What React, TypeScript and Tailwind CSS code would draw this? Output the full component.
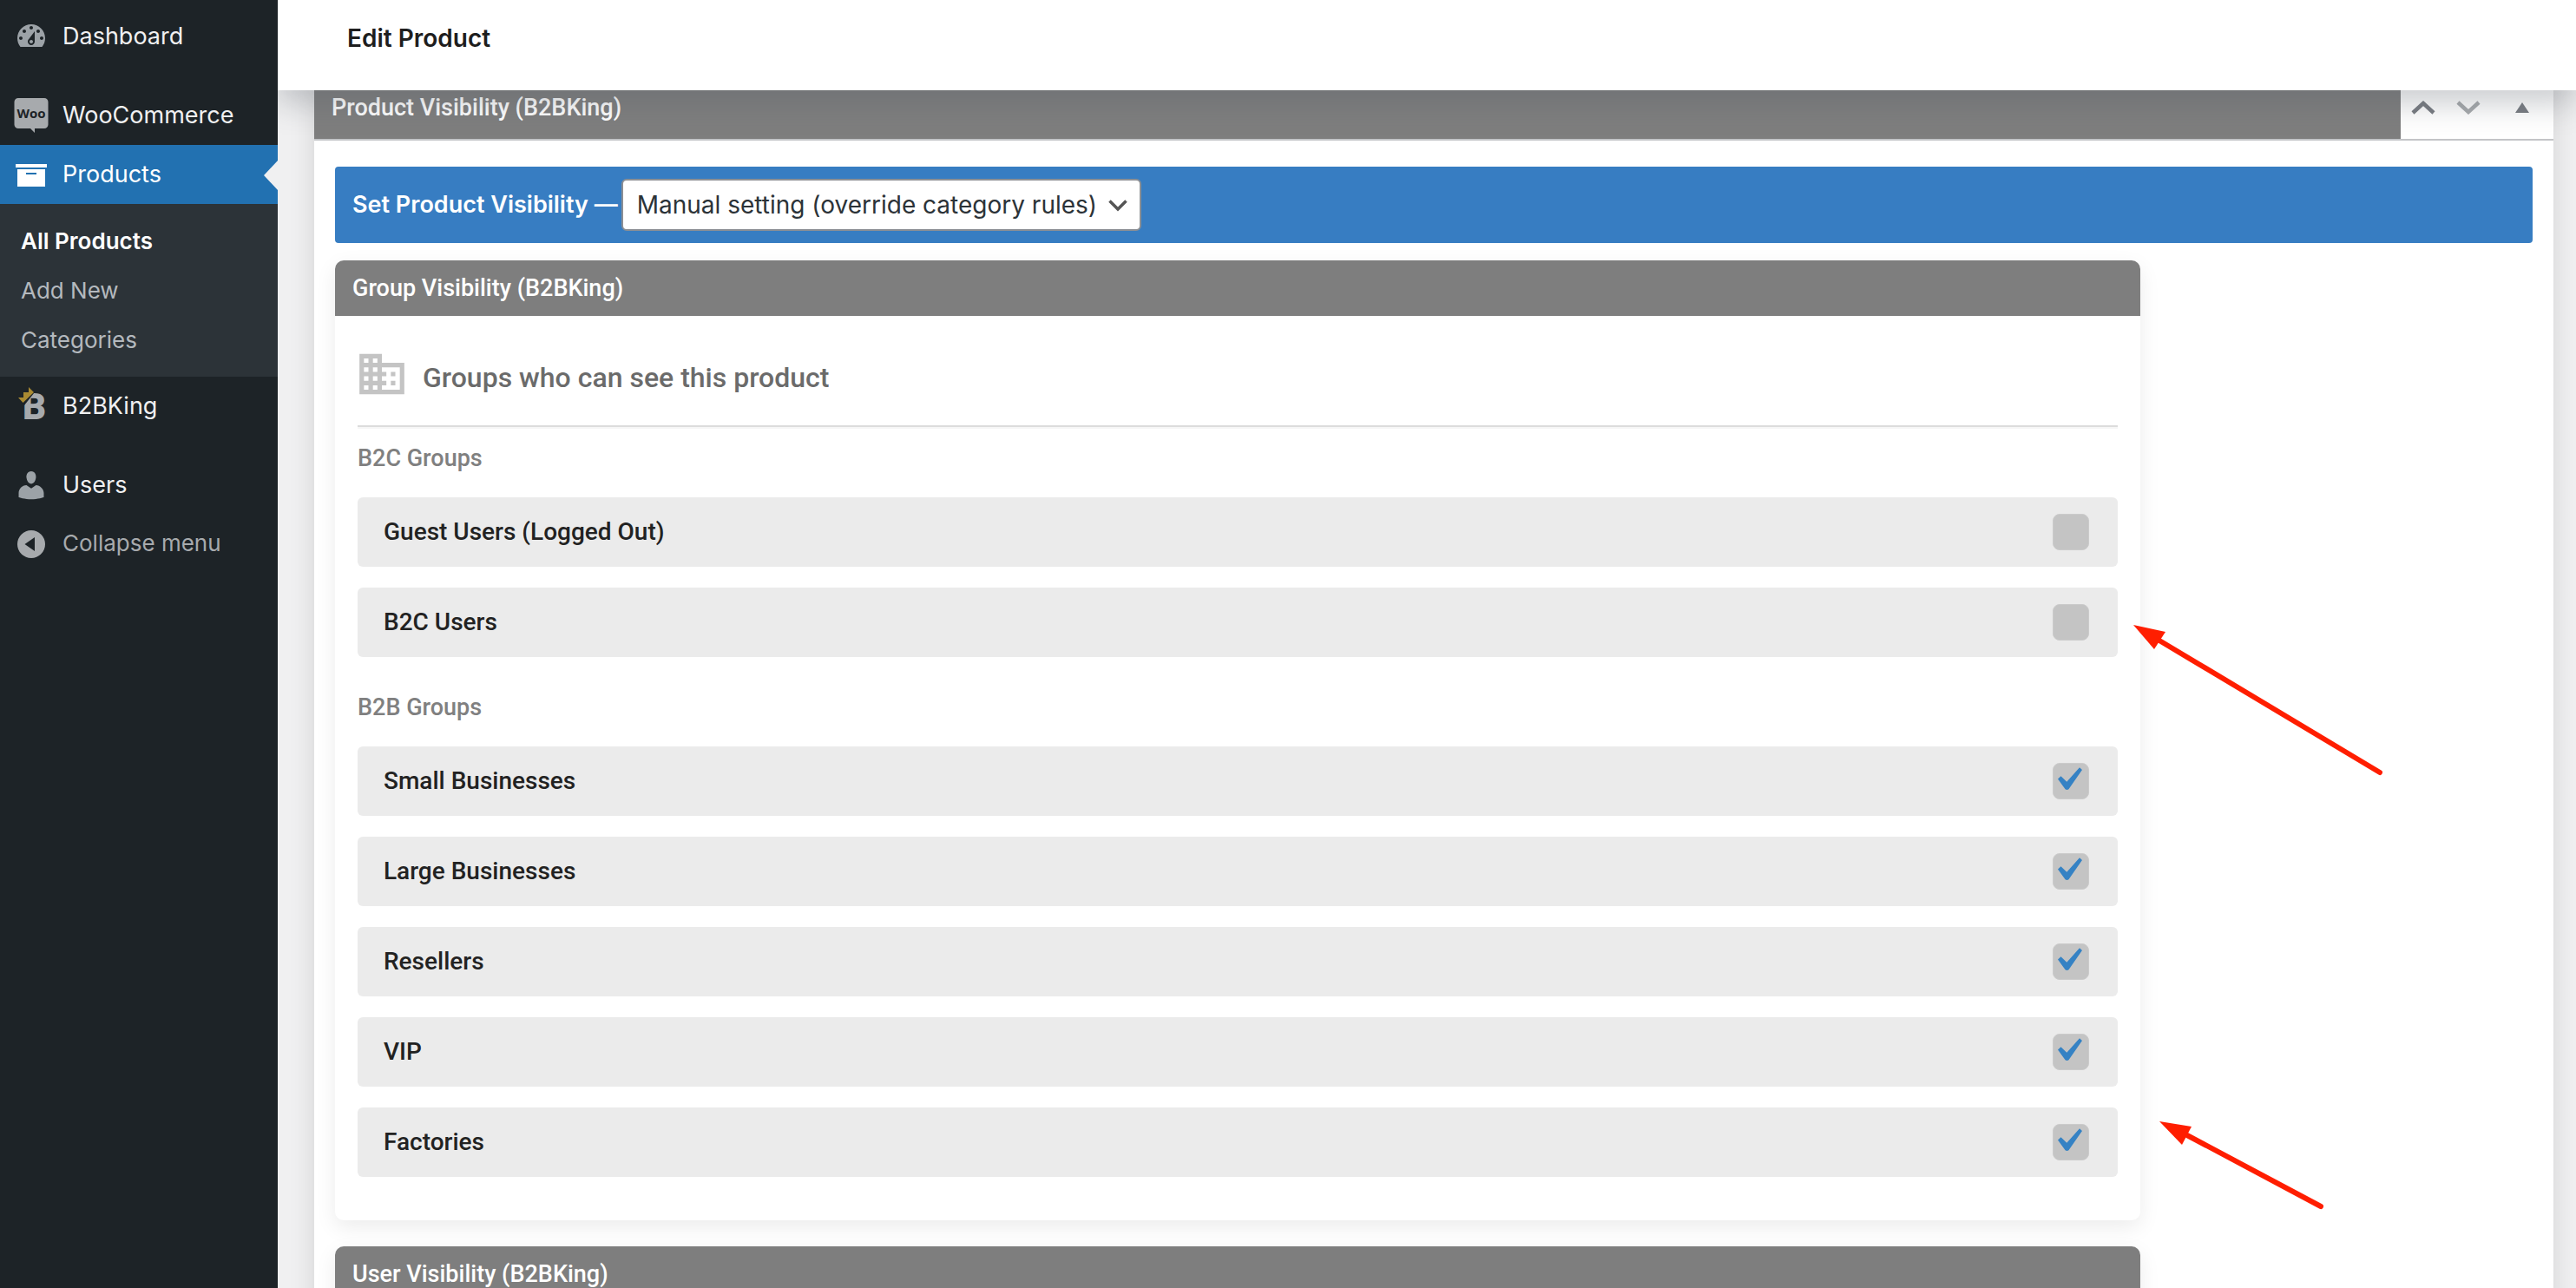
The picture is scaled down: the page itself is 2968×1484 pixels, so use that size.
import React, { useState } from 'react';

type Group = { id: string; name: string; visible: boolean };

const b2cGroups: Group[] = [
  { id: 'guests', name: 'Guest Users (Logged Out)', visible: false },
  { id: 'b2c', name: 'B2C Users', visible: false },
];

const b2bGroups: Group[] = [
  { id: 'small', name: 'Small Businesses', visible: true },
  { id: 'large', name: 'Large Businesses', visible: true },
  { id: 'resellers', name: 'Resellers', visible: true },
  { id: 'vip', name: 'VIP', visible: true },
  { id: 'factories', name: 'Factories', visible: true },
];

const DashboardIcon = () => (
  <svg viewBox="0 0 20 20" className="w-10 h-10 fill-[#9ca2a7]">
    <path d="M3.76 16h12.48c1.1-1.37 1.76-3.11 1.76-5 0-4.42-3.58-8-8-8s-8 3.58-8 8c0 1.89.66 3.63 1.76 5zM10 4c.55 0 1 .45 1 1s-.45 1-1 1-1-.45-1-1 .45-1 1-1zM6 6c.55 0 1 .45 1 1s-.45 1-1 1-1-.45-1-1 .45-1 1-1zm8 0c.55 0 1 .45 1 1s-.45 1-1 1-1-.45-1-1 .45-1 1-1zm-5.37 5.55L12 7v6c0 1.1-.9 2-2 2s-2-.9-2-2c0-.57.24-1.08.63-1.45zM4 10c.55 0 1 .45 1 1s-.45 1-1 1-1-.45-1-1 .45-1 1-1zm12 0c.55 0 1 .45 1 1s-.45 1-1 1-1-.45-1-1 .45-1 1-1zm-5 3c0-.55-.45-1-1-1s-1 .45-1 1 .45 1 1 1 1-.45 1-1z" />
  </svg>
);

const WooIcon = () => (
  <svg viewBox="0 0 40 40" className="w-10 h-10 fill-[#a7aaad]">
    <path d="M5 0h30a4.500 4.500 0 0 1 4.500 4.500v26a4.500 4.500 0 0 1-4.500 4.500H24v5l-5-5H5A4.500 4.500 0 0 1 .5 30.500v-26A4.500 4.500 0 0 1 5 0z" />
    <text
      x="20"
      y="23"
      textAnchor="middle"
      fontSize="15"
      className="fill-[#1d2327] font-['Open_Sans',sans-serif] font-bold"
    >
      Woo
    </text>
  </svg>
);

const ProductsIcon = () => (
  <svg viewBox="0 0 20 20" className="w-10 h-10 fill-white">
    <path d="M19 4v2H1V4h18zM2 7h16v10H2V7zm11 3V9H7v1h6z" />
  </svg>
);

const KingIcon = () => (
  <svg viewBox="0 0 40 40" className="w-10 h-10 overflow-visible">
    <text x="10" y="35" fontSize="42" className="fill-[#a7aaad] font-[Roboto,sans-serif] font-black">
      B
    </text>
    <path d="M4 10l7 1-1-6 6.500 1L16-1l7.500 5.500L12 19z" className="fill-[#1d2327]" />
    <path d="M5 10h6V4h6v-6l6 6L10.500 16z" className="fill-[#a98a32]" />
  </svg>
);

const UsersIcon = () => (
  <svg viewBox="0 0 20 20" className="w-10 h-10 fill-[#9ca2a7]">
    <path d="M10 9.250c-2.270 0-2.730-3.440-2.730-3.440C7 4.020 7.820 2 9.970 2c2.160 0 2.980 2.020 2.710 3.810 0 0-.41 3.440-2.680 3.440zm0 2.570L12.720 10c2.390 0 4.520 2.330 4.520 4.530v2.490s-3.650 1.130-7.240 1.130c-3.650 0-7.240-1.130-7.240-1.130v-2.490c0-2.250 1.940-4.480 4.470-4.480z" />
  </svg>
);

const CollapseIcon = () => (
  <svg viewBox="0 0 40 40" className="w-10 h-10">
    <circle cx="20" cy="22" r="16" className="fill-[#a7aaad]" />
    <path d="M12.500 22L24 14v16z" className="fill-[#1d2327]" />
  </svg>
);

const menuRow = 'flex items-center h-[68px] pl-4 gap-4 text-[27px] text-[#f0f0f1]';

const Sidebar = () => (
  <nav className="relative z-20 w-80 shrink-0 bg-[#1d2327] pt-2 font-[Inter,sans-serif]">
    <a href="#dashboard" className={menuRow}>
      <DashboardIcon />
      Dashboard
    </a>
    <a href="#woocommerce" className={`${menuRow} mt-[23px]`}>
      <WooIcon />
      WooCommerce
    </a>
    <a href="#products" className={`${menuRow} relative bg-[#2271b1] text-white`}>
      <ProductsIcon />
      Products
      <span className="absolute right-0 top-[18px] border-y-[17px] border-r-[16px] border-y-transparent border-r-[#f0f0f1]" />
    </a>
    <ul className="bg-[#2c3338] py-[14px] text-[26px] text-[#b4b9be]">
      <li>
        <a href="#all-products" className="flex items-center h-[57px] pl-6 font-semibold text-white">
          All Products
        </a>
      </li>
      <li>
        <a href="#add-new" className="flex items-center h-[57px] pl-6">
          Add New
        </a>
      </li>
      <li>
        <a href="#categories" className="flex items-center h-[57px] pl-6">
          Categories
        </a>
      </li>
    </ul>
    <a href="#b2bking" className={menuRow}>
      <KingIcon />
      B2BKing
    </a>
    <a href="#users" className={`${menuRow} mt-[23px]`}>
      <UsersIcon />
      Users
    </a>
    <button type="button" className="flex items-center h-16 pl-4 gap-4 text-[26px] text-[#a7aaad]">
      <CollapseIcon />
      Collapse menu
    </button>
  </nav>
);

const GroupRow = ({ group }: { group: Group }) => {
  const [checked, setChecked] = useState(group.visible);

  return (
    <label className="flex items-center justify-between h-20 pl-[30px] pr-[33px] rounded-md bg-[#ebebeb] text-[28px] font-medium text-[#222]">
      {group.name}
      <span className="grid">
        <input
          type="checkbox"
          checked={checked}
          onChange={(e) => setChecked(e.target.checked)}
          className="peer col-start-1 row-start-1 appearance-none size-[42px] rounded-lg border border-[#cbcbcb] bg-[#c4c4c4]"
        />
        <svg
          viewBox="0 0 42 42"
          className="col-start-1 row-start-1 size-[42px] pointer-events-none invisible peer-checked:visible fill-[#3582c4]"
        >
          <path d="M6 18.500L9.500 15.300 16.300 21.700 31 5.300 34 8 18.500 30.300Q16.500 31.500 14.500 30.300z" />
        </svg>
      </span>
    </label>
  );
};

const GroupList = ({ title, groups }: { title: string; groups: Group[] }) => (
  <fieldset>
    <legend className="h-[81px] pt-4 text-[27px] leading-10 font-medium text-[#808080]">{title}</legend>
    <div className="flex flex-col gap-6">
      {groups.map((group) => (
        <GroupRow key={group.id} group={group} />
      ))}
    </div>
  </fieldset>
);

const Card = ({ title, children }: { title: string; children?: React.ReactNode }) => (
  <section className="rounded-[10px] bg-white shadow-[0_8px_24px_rgba(0,0,0,0.08)]">
    <h2 className="flex items-center h-16 px-5 rounded-t-[10px] bg-[#7e7e7e] text-[27px] font-medium text-white">
      {title}
    </h2>
    {children}
  </section>
);

const Arrows = () => (
  <svg
    viewBox="0 0 300 700"
    className="absolute left-full top-[410px] -ml-3 w-[300px] h-[700px] fill-[#ff1e00] stroke-[#ff1e00] pointer-events-none"
  >
    <path d="M34 28L288 180" strokeWidth="6" strokeLinecap="round" />
    <path d="M4 10L41 18 28 38z" stroke="none" />
    <path d="M64 597L220 680" strokeWidth="6" strokeLinecap="round" />
    <path d="M34 582L71 588 60 609z" stroke="none" />
  </svg>
);

const App = () => {
  const [visibility, setVisibility] = useState('manual');

  return (
    <div className="flex h-screen overflow-hidden bg-[#f0f0f1] font-[Roboto,sans-serif]">
      <Sidebar />

      <div className="flex-1 min-w-0">
        <header className="relative z-10 flex items-center h-[104px] pl-20 pb-4 bg-white shadow-[0_16px_32px_rgba(85,93,102,0.3)]">
          <h1 className="font-[Inter,sans-serif] text-[28px] font-semibold text-[#1e1e1e]">Edit Product</h1>
        </header>

        <main className="-mt-4 ml-[42px] mr-[26px] min-h-full bg-white shadow-[0_0_28px_rgba(0,0,0,0.12)]">
          <div className="flex h-[74px] border-b-2 border-[#c3c4c7]">
            <h2 className="flex flex-1 items-center px-5 bg-[#7e7e7e] text-[27px] font-medium text-white">
              Product Visibility (B2BKing)
            </h2>
            <div className="flex items-center pl-3">
              <button type="button" aria-label="Move up" className="pr-6">
                <svg viewBox="0 0 28 16" className="w-7 h-4 fill-none stroke-[#787c82]" strokeWidth="4.500">
                  <path d="M2 14L14 3l12 11" />
                </svg>
              </button>
              <button type="button" aria-label="Move down" className="pr-10">
                <svg viewBox="0 0 28 16" className="w-7 h-4 fill-none stroke-[#a7aaad]" strokeWidth="4.500">
                  <path d="M2 2l12 11L26 2" />
                </svg>
              </button>
              <button type="button" aria-label="Toggle panel" className="pr-7">
                <svg viewBox="0 0 16 12" className="w-4 h-3 fill-[#787c82]">
                  <path d="M8 0l8 12H0z" />
                </svg>
              </button>
            </div>
          </div>

          <div className="px-6 pt-[30px]">
            <div className="flex items-center h-[88px] pl-5 rounded bg-[#377dc2] font-[Inter,sans-serif]">
              <label htmlFor="visibility" className="text-[27px] font-semibold text-white">
                Set Product Visibility —
              </label>
              <div className="relative ml-1">
                <select
                  id="visibility"
                  value={visibility}
                  onChange={(e) => setVisibility(e.target.value)}
                  className="appearance-none h-[60px] pl-4 pr-12 rounded-md border-2 border-[#8c8f94] bg-white text-[28px] text-[#2c3338]"
                >
                  <option value="manual">Manual setting (override category rules)</option>
                </select>
                <svg
                  viewBox="0 0 22 14"
                  className="absolute right-4 top-6 w-[22px] h-[14px] fill-none stroke-[#555] pointer-events-none"
                  strokeWidth="3.500"
                >
                  <path d="M1.500 1.500L11 11l9.500-9.500" />
                </svg>
              </div>
            </div>

            <div className="relative flex flex-col gap-[30px] w-[82.150%] mt-5">
              <Card title="Group Visibility (B2BKing)">
                <div className="px-[26px] pb-[50px]">
                  <div className="flex items-center gap-4 h-32 pt-2 border-b-2 border-[#dcdcdc] shadow-[0_2px_0_#f6f6f6]">
                    <svg viewBox="0 0 24 24" className="w-[62px] h-[62px] -ml-[3px] fill-[#c4c4c4]">
                      <path d="M12 7V3H2v18h20V7H12zM6 19H4v-2h2v2zm0-4H4v-2h2v2zm0-4H4V9h2v2zm0-4H4V5h2v2zm4 12H8v-2h2v2zm0-4H8v-2h2v2zm0-4H8V9h2v2zm0-4H8V5h2v2zm10 12h-8v-2h2v-2h-2v-2h2v-2h-2V9h8v10zm-2-8h-2v2h2v-2zm0 4h-2v2h2v-2z" />
                    </svg>
                    <h3 className="pt-2 text-[32px] font-medium text-[#6b6b6b]">Groups who can see this product</h3>
                  </div>
                  <GroupList title="B2C Groups" groups={b2cGroups} />
                  <div className="mt-[22px]">
                    <GroupList title="B2B Groups" groups={b2bGroups} />
                  </div>
                </div>
              </Card>
              <Card title="User Visibility (B2BKing)" />
              <Arrows />
            </div>
          </div>
        </main>
      </div>
    </div>
  );
};

export default App;
